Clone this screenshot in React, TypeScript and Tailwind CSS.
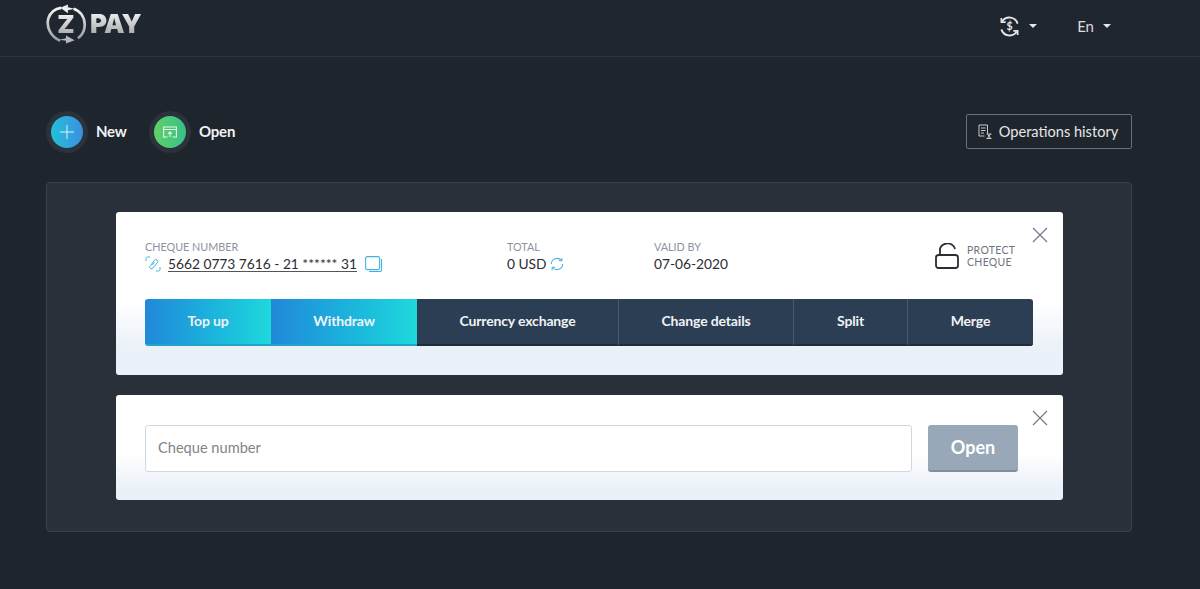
const tabs = [
  { label: "Top up", width: "w-[126px]", active: true },
  { label: "Withdraw", width: "w-[146px]", active: true },
  { label: "Currency exchange", width: "w-[201px]", active: false },
  { label: "Change details", width: "w-[175px]", active: false },
  { label: "Split", width: "w-[114px]", active: false },
  { label: "Merge", width: "w-[126px]", active: false },
];

function Caret() {
  return <span className="ml-[9px] h-0 w-0 border-x-[4px] border-t-[4px] border-x-transparent border-t-[#e4e6e8]" />;
}

function Logo() {
  return (
    <div className="flex items-center">
      <div className="relative flex h-[40px] w-[40px] items-center justify-center">
        <svg viewBox="0 0 42 42" className="absolute inset-0 h-full w-full" fill="none">
          <defs>
            <linearGradient id="logoRing" x1="0" y1="0" x2="0" y2="1">
              <stop offset="0" stopColor="#f4f4f4" />
              <stop offset="1" stopColor="#9a9c9e" />
            </linearGradient>
          </defs>
          <path d="M15 38.500C5 35 0 24 2.500 15 4.500 9 9.500 5 16 4" stroke="url(#logoRing)" strokeWidth="2.800" />
          <path d="M29 5c8 3 12.500 10 11.500 19-.5 5-3 9-7 12" stroke="url(#logoRing)" strokeWidth="2.800" />
          <path d="M15 4 23 .5v3L30 5l-7 1.600v3z" fill="#eeeeee" />
          <path d="M30 38 21 41.500v-2.800L14 37.500l7-1.500V33z" fill="#b5b7b8" />
        </svg>
        <span className="bg-gradient-to-b from-[#f7f7f7] to-[#a2a4a6] bg-clip-text font-['Inter',sans-serif] text-[25px] leading-none font-black text-transparent">
          Z
        </span>
      </div>
      <span className="ml-[4px] bg-gradient-to-b from-[#f5f5f5] to-[#a0a2a4] bg-clip-text font-['Inter',sans-serif] text-[26px] leading-none font-black tracking-[-0.8px] text-transparent">
        PAY
      </span>
    </div>
  );
}

function CloseButton() {
  return (
    <button className="absolute top-[15px] right-[15px] text-[#737a8a]">
      <svg viewBox="0 0 16 16" className="h-[16px] w-[16px]" fill="none" stroke="currentColor" strokeWidth="1.200">
        <path d="M1 1l14 14M15 1 1 15" />
      </svg>
    </button>
  );
}

export default function App() {
  return (
    <div className="h-[589px] w-[1200px] overflow-hidden bg-[#1f252d] font-['Lato',sans-serif]">
      {/* Header */}
      <header className="flex h-[57px] items-center justify-between border-b border-[#2f353e] bg-[#20262f] pr-[89px] pl-[46px]">
        <div className="-mt-[8px]">
          <Logo />
        </div>
        <div className="-mt-[4px] flex items-center">
          <div className="flex items-center">
            <svg viewBox="0 0 22 22" className="h-[21px] w-[21px]" fill="none" stroke="#e4e6e8" strokeWidth="2">
              <path d="M3.500 5.500A9 9 0 0 1 19.500 8" />
              <path d="M18.500 16.500A9 9 0 0 1 2.500 14" />
              <path d="M2.500 2v4.500H7M19.500 20v-4.500H15" strokeWidth="1.800" />
              <text x="11" y="15" fontSize="11" fontWeight="700" textAnchor="middle" fill="#e4e6e8" stroke="none" fontFamily="Lato">
                $
              </text>
            </svg>
            <Caret />
          </div>
          <div className="ml-[40px] flex items-center text-[15px] text-[#d9dbde]">
            En
            <Caret />
          </div>
        </div>
      </header>

      <main className="pr-[68px] pl-[46px]">
        {/* Actions */}
        <div className="mt-[57px] flex h-[35px] items-center justify-between">
          <div className="flex items-center">
            <div className="flex h-[42px] w-[42px] items-center justify-center rounded-full bg-[#2b323b]">
              <span className="flex h-[32px] w-[32px] items-center justify-center rounded-full bg-gradient-to-r from-[#1fc0d8] to-[#3a8fe0]">
                <svg viewBox="0 0 14 14" className="h-[14px] w-[14px]" stroke="#d8f4fa" strokeWidth="1">
                  <path d="M7 0v14M0 7h14" />
                </svg>
              </span>
            </div>
            <span className="ml-[8px] w-[30px] text-[15px] font-bold tracking-[-0.2px] whitespace-nowrap text-[#f1f2f3]">New</span>
            <div className="ml-[23px] flex h-[42px] w-[42px] items-center justify-center rounded-full bg-[#2b323b]">
              <span className="flex h-[32px] w-[32px] items-center justify-center rounded-full bg-gradient-to-r from-[#5fd068] to-[#35c088]">
                <svg viewBox="0 0 14 12" className="h-[12px] w-[14px]" fill="none" stroke="#e3f9e6" strokeWidth="1.100">
                  <path d="M4.500 11H.6V1h12.800v10H9.500M.6 3.500h12.800M7 11V6M5 7.800 7 5.800l2 2" />
                </svg>
              </span>
            </div>
            <span className="ml-[8px] text-[15px] font-bold tracking-[-0.2px] text-[#f1f2f3]">Open</span>
          </div>
          <button className="flex h-[35px] w-[166px] items-center justify-center gap-[6px] rounded-[2px] border border-[#6a7078] pr-[2px] text-[14.6px] text-[#e6e7e9]">
            <svg viewBox="0 0 15 15" className="h-[15px] w-[15px]" fill="none" stroke="#c9cbce" strokeWidth="1">
              <path d="M9.500 9.500V1H1v11h5.500M3 4h4.500M3 6.500h4.500M3 9h3" />
              <path d="M8.500 10h5M8.500 14.500h5M9.500 10.200l3 4M12.500 10.200l-3 4" />
            </svg>
            Operations history
          </button>
        </div>

        {/* Panel */}
        <section className="mt-[33px] h-[350px] w-[1086px] rounded-[4px] border border-[#3a414a] bg-[#2a3039] pt-[29px] pr-[68px] pl-[69px]">
          {/* Cheque card */}
          <div className="relative h-[163px] rounded-[3px] bg-gradient-to-b from-white from-[55%] to-[#ebf1f8] to-[83%] px-[29px] pt-[29px]">
            <CloseButton />
            <div className="flex h-[58px] items-start">
              <div className="w-[362px]">
                <div className="text-[10.8px] leading-[12px] text-[#8b92a1]">CHEQUE NUMBER</div>
                <div className="mt-[2px] flex h-[18px] items-center">
                  <svg viewBox="0 0 16 16" className="h-[16px] w-[16px]" fill="none" stroke="#45b3e6" strokeWidth="1">
                    <path d="M1 5V2.500A1.500 1.500 0 0 1 2.500 1H5M11 15h2.500a1.500 1.500 0 0 0 1.500-1.500V11" />
                    <path d="M5 10.500 9.500 4a2 2 0 0 1 3 2.500L8 12a2 2 0 0 1-3.500-1.500M7.500 9l2-3" />
                  </svg>
                  <span className="ml-[7px] border-b border-[#555] text-[13.75px] leading-[15px] whitespace-nowrap text-[#2a2d33]">
                    5662 0773 7616 - 21 ****** 31
                  </span>
                  <svg viewBox="0 0 18 16" className="ml-[8px] h-[16px] w-[18px]" fill="none" stroke="#3fb5e4" strokeWidth="1.100">
                    <rect x="0.600" y="0.600" width="14" height="13" rx="1.500" />
                    <path d="M16.500 3v11a1.500 1.500 0 0 1-1.500 1.500H4" />
                  </svg>
                </div>
              </div>
              <div className="w-[147px]">
                <div className="text-[10.8px] leading-[12px] text-[#8b92a1]">TOTAL</div>
                <div className="mt-[2px] flex h-[18px] items-center text-[13.75px] text-[#2a2d33]">
                  0 USD
                  <svg viewBox="0 0 16 16" className="ml-[3px] h-[14px] w-[14px]" fill="none" stroke="#45b3e6" strokeWidth="1.200">
                    <path d="M1.500 8A6.500 6.500 0 0 1 13 4M14.500 8A6.500 6.500 0 0 1 3 12" />
                    <path d="M13.500 1v3.300h-3.200M2.500 15v-3.300h3.200" />
                  </svg>
                </div>
              </div>
              <div className="w-[281px]">
                <div className="text-[10.8px] leading-[12px] text-[#8b92a1]">VALID BY</div>
                <div className="mt-[2px] flex h-[18px] items-center text-[13.75px] text-[#2a2d33]">07-06-2020</div>
              </div>
              <div className="mt-[2px] flex items-center">
                <svg viewBox="0 0 24 26" className="h-[26px] w-[24px]" fill="none" stroke="#2b2e34" strokeWidth="1.800">
                  <rect x="1" y="12" width="22" height="13" rx="2.500" />
                  <path d="M5 12V8a7.500 6.500 0 0 1 15-2" />
                </svg>
                <div className="ml-[8px] text-[10.5px] leading-[12px] tracking-[0.3px] text-[#6f7480]">
                  PROTECT
                  <br />
                  CHEQUE
                </div>
              </div>
            </div>
            <div className="flex h-[47px] w-[888px] overflow-hidden rounded-[3px]">
              {tabs.map((tab) => (
                <div
                  key={tab.label}
                  className={`flex items-center justify-center pb-[3px] text-[14px] font-bold tracking-[-0.15px] text-[#f0f3f6] ${tab.width} ${
                    tab.active
                      ? "border-b-2 border-b-[#1ea7c9] bg-gradient-to-r from-[#2188d9] to-[#1fd8dc]"
                      : "border-b-2 border-b-[#1f2c3a] bg-[#2c3e53] [&:not(:nth-child(3))]:border-l [&:not(:nth-child(3))]:border-l-[#4a5a6c]"
                  }`}
                >
                  {tab.label}
                </div>
              ))}
            </div>
          </div>

          {/* Open by number card */}
          <div className="relative mt-[20px] flex h-[105px] gap-[16px] rounded-[3px] bg-gradient-to-b from-white from-[55%] to-[#ebf1f8] to-[90%] px-[29px] pt-[30px]">
            <CloseButton />
            <input
              placeholder="Cheque number"
              className="h-[47px] w-[767px] rounded-[3px] border border-[#ced8e3] bg-white px-[12px] pb-[2px] text-[14.6px] text-[#2a2d33] outline-none placeholder:text-[#808488]"
            />
            <button className="h-[47px] w-[90px] rounded-[3px] border-b-2 border-b-[#7f8fa2] bg-[#98a8b9] text-[18px] font-bold text-white">
              Open
            </button>
          </div>
        </section>
      </main>
    </div>
  );
}
